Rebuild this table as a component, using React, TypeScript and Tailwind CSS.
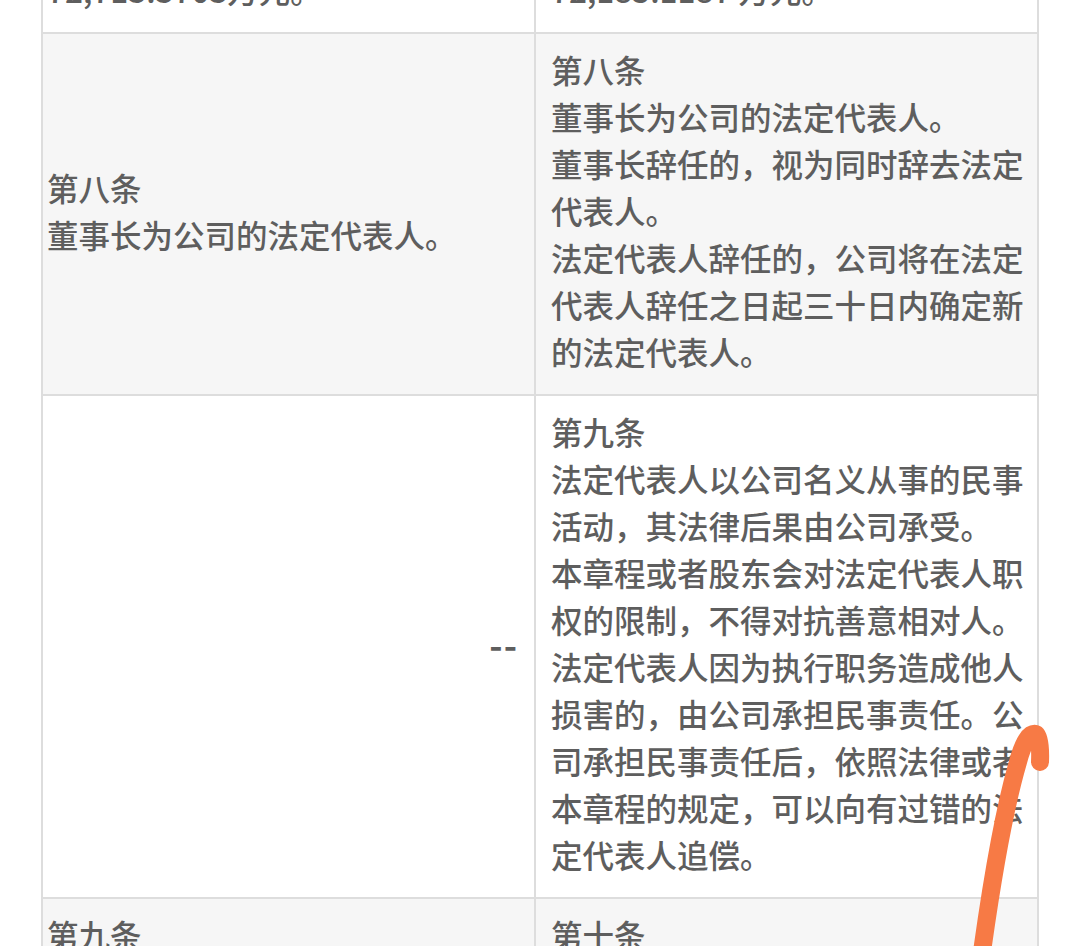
import React from "react";

type Row = {
  left: string[];
  right: string[];
  gray?: boolean;
  leftAlign?: "left" | "right";
};

const rows: Row[] = [
  { left: ["72,713.3703万元。"], right: ["72,185.1187 万元。"] },
  {
    gray: true,
    left: ["第八条", "董事长为公司的法定代表人。"],
    right: [
      "第八条",
      "董事长为公司的法定代表人。",
      "董事长辞任的，视为同时辞去法定代表人。",
      "法定代表人辞任的，公司将在法定代表人辞任之日起三十日内确定新的法定代表人。",
    ],
  },
  {
    left: ["--"],
    leftAlign: "right",
    right: [
      "第九条",
      "法定代表人以公司名义从事的民事活动，其法律后果由公司承受。",
      "本章程或者股东会对法定代表人职权的限制，不得对抗善意相对人。",
      "法定代表人因为执行职务造成他人损害的，由公司承担民事责任。公司承担民事责任后，依照法律或者本章程的规定，可以向有过错的法定代表人追偿。",
    ],
  },
  {
    gray: true,
    left: ["第九条", "法定代表人以公司名义从事的民事活动，其法律后果由公司承受。"],
    right: ["第十条", "法定代表人以公司名义从事的民事活动，其法律后果由公司承受。"],
  },
];

const App = () => {
  return (
    <div className="relative h-[946px] w-full overflow-hidden bg-white font-['Noto_Sans_CJK_SC','Noto_Sans',sans-serif]">
      <div className="-mt-[46px] ml-[41px] w-[998px] border-x-2 border-[#ddd] text-[31.5px] font-medium leading-[47px] text-[#5e5e5e]">
        {rows.map((row, i) => (
          <div
            key={i}
            className={`grid grid-cols-[491px_1fr] border-b-2 border-[#ddd] ${
              row.gray ? "bg-[#f6f6f6]" : "bg-white"
            }`}
          >
            <div
              className={`flex flex-col justify-center pt-[12px] pb-[19px] ${
                row.leftAlign === "right" ? "pl-[5px] pr-4 text-right" : "pl-[4px] pr-2 text-left"
              }`}
            >
              {row.left.map((t, j) => (
                <p
                  key={j}
                  className={t === "--" ? "text-[36px] font-bold tracking-[1px]" : ""}
                >
                  {t}
                </p>
              ))}
            </div>
            <div className="border-l-2 border-[#ddd] pl-[15px] pr-3 pt-[12px] pb-[19px]">
              {row.right.map((t, j) => (
                <p key={j}>{t}</p>
              ))}
            </div>
          </div>
        ))}
      </div>

      {/* orange pen mark drawn over the table */}
      <svg
        className="pointer-events-none absolute left-0 top-0"
        width="1080"
        height="946"
        viewBox="0 0 1080 946"
      >
        <path
          d="M982 952 C992 880 1004 810 1018 762 Q1026 732 1036 734 Q1041 738 1040 762"
          fill="none"
          stroke="#f77a45"
          strokeWidth="18"
          strokeLinecap="round"
          strokeLinejoin="round"
        />
      </svg>
    </div>
  );
};

export default App;
